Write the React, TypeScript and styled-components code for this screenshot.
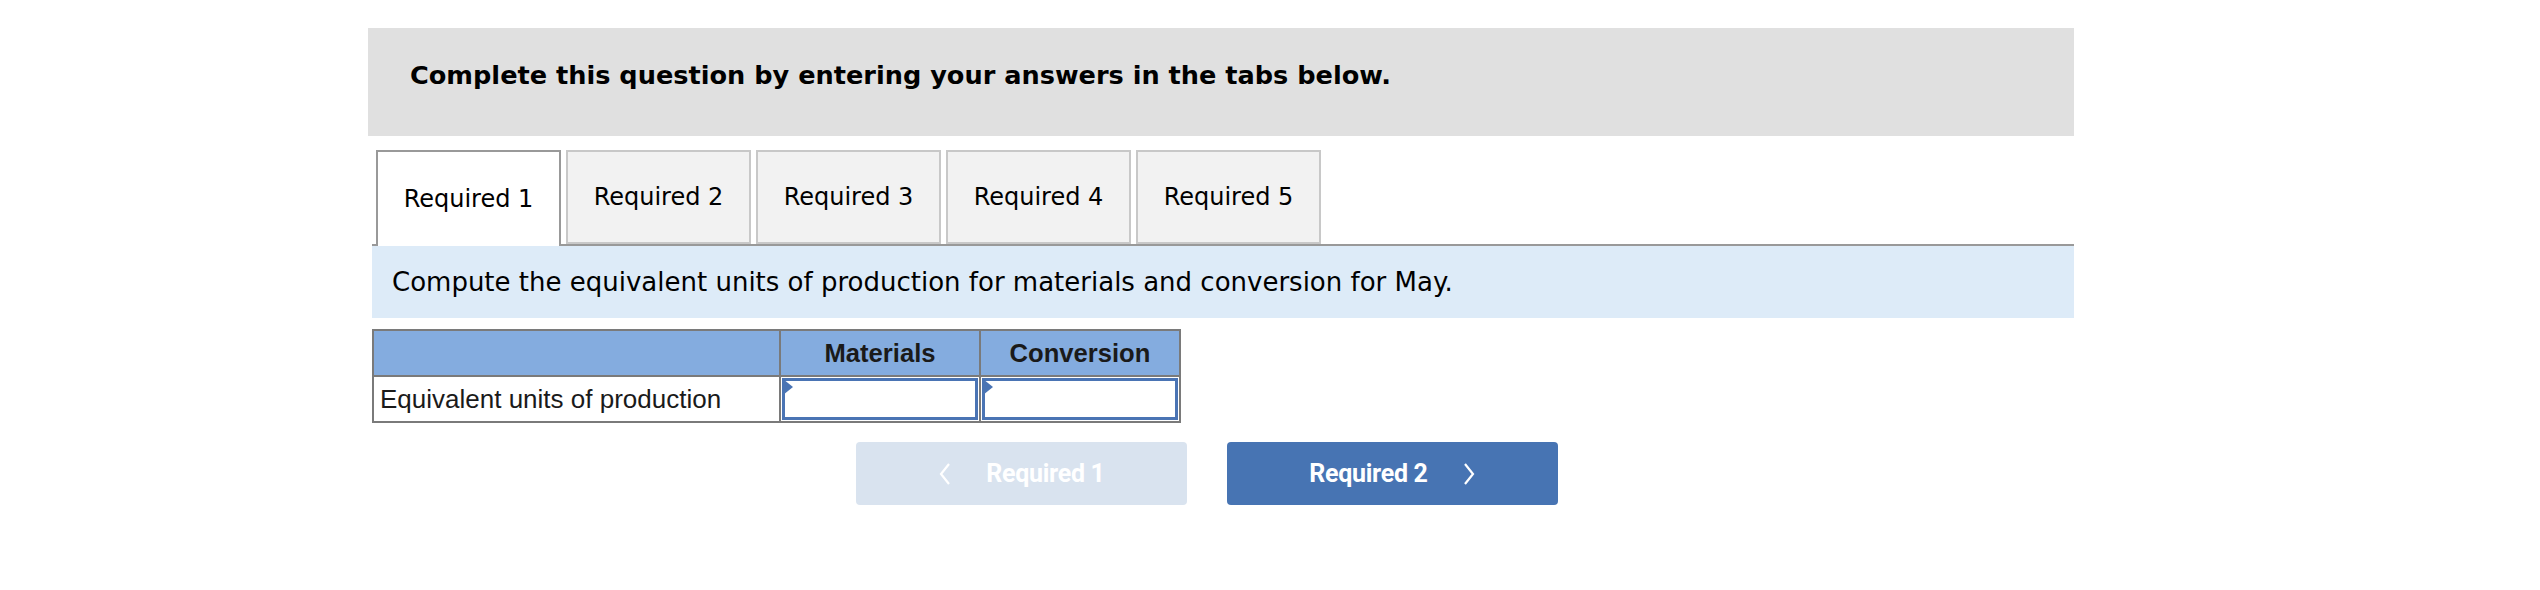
import styled, { createGlobalStyle } from 'styled-components';

const GlobalStyle = createGlobalStyle`
    body {
        margin: 0;
        background: #ffffff;
        font-family: 'DejaVu Sans', Verdana, sans-serif;
    }
`;

const Page = styled.div`
    width: 2540px;
    height: 590px;
    padding: 28px 0 0 368px;
    box-sizing: border-box;
`;

const Instructions = styled.div`
    width: 1706px;
    height: 108px;
    background: #e0e0e0;
    display: flex;
    align-items: center;
    padding-left: 42px;
    padding-bottom: 14px;
    box-sizing: border-box;
    font-family: 'DejaVu Sans', Verdana, sans-serif;
    font-weight: bold;
    font-size: 25.6px;
    color: #000;
`;

const Section = styled.div`
    margin-top: 14px;
    margin-left: 4px;
    width: 1702px;
`;

const TabBar = styled.div`
    display: flex;
    gap: 5px;
    padding-left: 4px;
    border-bottom: 2px solid #999999;
`;

const Tab = styled.div<{ $active?: boolean }>`
    width: 185px;
    box-sizing: border-box;
    display: flex;
    align-items: center;
    justify-content: center;
    font-size: 24px;
    color: #000;
    background: ${(p) => (p.$active ? '#ffffff' : '#f2f2f2')};
    border: 2px solid ${(p) => (p.$active ? '#999999' : '#c8c8c8')};
    border-bottom: ${(p) => (p.$active ? 'none' : '2px solid #c8c8c8')};
    margin-bottom: ${(p) => (p.$active ? '-2px' : '0')};
    height: ${(p) => (p.$active ? '96px' : '94px')};
`;

const Prompt = styled.div`
    height: 72px;
    background: #ddebf8;
    display: flex;
    align-items: center;
    padding-left: 20px;
    font-size: 26px;
    color: #000;
`;

const Grid = styled.div`
    margin-top: 11px;
    display: grid;
    grid-template-columns: 405px 198px 198px;
    grid-auto-rows: 44px;
    width: fit-content;
    border: 2px solid #7a7a7a;
    background: #7a7a7a;
    gap: 2px;
    font-family: 'Liberation Sans', Arial, sans-serif;
`;

const HeadCell = styled.div`
    background: #84acdf;
    display: flex;
    align-items: center;
    justify-content: center;
    font-weight: bold;
    font-size: 25.6px;
    color: #1a1a1a;
`;

const LabelCell = styled.div`
    background: #ffffff;
    display: flex;
    align-items: center;
    padding-left: 6px;
    font-size: 26px;
    color: #1a1a1a;
`;

const InputCell = styled.div`
    background: #ffffff;
    position: relative;
    padding: 1px;
`;

const InputBox = styled.div`
    height: 100%;
    box-sizing: border-box;
    border: 3px solid #4a74b4;
    background: #fff;
`;

const Flag = styled.span`
    position: absolute;
    top: 2px;
    left: 2px;
    width: 0;
    height: 0;
    border-top: 8px solid transparent;
    border-bottom: 8px solid transparent;
    border-left: 10px solid #4a74b4;
`;

const Nav = styled.div`
    display: flex;
    gap: 40px;
    margin-top: 19px;
    padding-left: 488px;
`;

const NavButton = styled.div<{ $disabled?: boolean }>`
    width: 331px;
    height: 63px;
    border-radius: 4px;
    background: ${(p) => (p.$disabled ? '#d9e3ef' : '#4774b3')};
    color: #ffffff;
    display: flex;
    align-items: center;
    justify-content: center;
    gap: 34px;
    font-family: Roboto, 'Liberation Sans', sans-serif;
    font-weight: bold;
    font-size: 25px;
    letter-spacing: -0.3px;
`;

const Chevron = styled.svg`
    width: 14px;
    height: 24px;
`;

const ChevronLeft = () => (
    <Chevron viewBox="0 0 14 24">
        <path d="M11 2 L3 12 L11 22" fill="none" stroke="#fff" strokeWidth="2.2" />
    </Chevron>
);

const ChevronRight = () => (
    <Chevron viewBox="0 0 14 24">
        <path d="M3 2 L11 12 L3 22" fill="none" stroke="#fff" strokeWidth="2.2" />
    </Chevron>
);

const tabs = ['Required 1', 'Required 2', 'Required 3', 'Required 4', 'Required 5'];

export default function App() {
    return (
        <>
            <GlobalStyle />
            <Page>
                <Instructions>Complete this question by entering your answers in the tabs below.</Instructions>
                <Section>
                    <TabBar>
                        {tabs.map((t, i) => (
                            <Tab key={t} $active={i === 0}>
                                {t}
                            </Tab>
                        ))}
                    </TabBar>
                    <Prompt>Compute the equivalent units of production for materials and conversion for May.</Prompt>
                    <Grid>
                        <HeadCell />
                        <HeadCell>Materials</HeadCell>
                        <HeadCell>Conversion</HeadCell>
                        <LabelCell>Equivalent units of production</LabelCell>
                        <InputCell>
                            <InputBox />
                            <Flag />
                        </InputCell>
                        <InputCell>
                            <InputBox />
                            <Flag />
                        </InputCell>
                    </Grid>
                </Section>
                <Nav>
                    <NavButton $disabled>
                        <ChevronLeft />
                        <span>Required 1</span>
                    </NavButton>
                    <NavButton>
                        <span>Required 2</span>
                        <ChevronRight />
                    </NavButton>
                </Nav>
            </Page>
        </>
    );
}
